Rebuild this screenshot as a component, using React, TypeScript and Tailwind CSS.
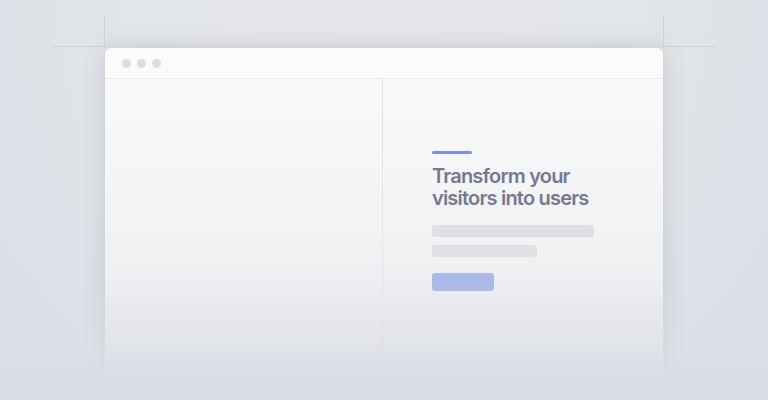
export default function App() {
  return (
    <div className="relative h-[400px] w-[768px] overflow-hidden bg-[radial-gradient(ellipse_at_top,#e6e7ea_0%,#e1e4e8_50%,#dadde4_100%)] font-['Inter',sans-serif]">
      {/* guide lines */}
      <div className="absolute left-[104px] top-[16px] h-[32px] w-px bg-[#cfd1d6]" />
      <div className="absolute left-[663px] top-[16px] h-[32px] w-px bg-[#cfd1d6]" />
      <div className="absolute left-[52px] top-[46px] h-px w-[664px] bg-[#cfd1d6]" />

      <div className="pt-[48px] pl-[105px]">
        <div className="flex h-[380px] w-[558px] flex-col overflow-hidden rounded-t-[6px] bg-gradient-to-b from-[#fbfbfb] via-[#f1f2f4] to-[#e2e4e8] shadow-[0_0_24px_rgba(0,0,0,0.12)]">
          <div className="flex h-[31px] items-center gap-[6px] border-b border-[#ebecee] bg-[#fbfbfb] pl-[17px]">
            <span className="h-[9px] w-[9px] rounded-full bg-[#dcdde0]" />
            <span className="h-[9px] w-[9px] rounded-full bg-[#dcdde0]" />
            <span className="h-[9px] w-[9px] rounded-full bg-[#dcdde0]" />
          </div>
          <div className="flex flex-1">
            <div className="w-[278px] border-r border-[#e2e3e6]" />
            <div className="flex flex-1 flex-col pl-[49px] pt-[72px]">
              <div className="h-[3px] w-[40px] rounded-full bg-[#7b8ef0]" />
              <h1 className="mt-[11px] text-[20px] font-semibold leading-[22px] tracking-[-0.04em] text-[#767892]">
                Transform your
                <br />
                visitors into users
              </h1>
              <div className="mt-[16px] h-[12px] w-[162px] rounded-[3px] bg-[#dfe0e4]" />
              <div className="mt-[8px] h-[12px] w-[105px] rounded-[3px] bg-[#dfe0e4]" />
              <div className="mt-[16px] h-[18px] w-[62px] rounded-[3px] bg-[#aab8eb]" />
            </div>
          </div>
        </div>
      </div>
      <div className="pointer-events-none absolute inset-x-0 bottom-0 h-[120px] bg-[linear-gradient(to_bottom,rgba(220,223,229,0)_0%,rgba(220,223,229,0.6)_55%,#dadde4_78%,#dadde4_100%)]" />
    </div>
  );
}
